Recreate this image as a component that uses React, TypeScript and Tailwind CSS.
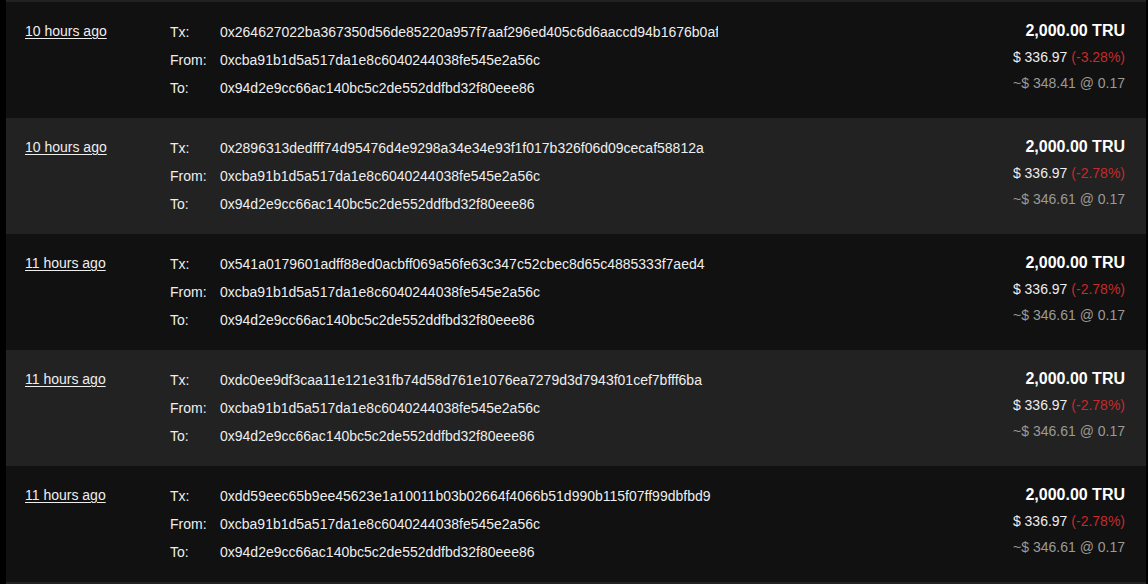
import React from "react";

const rows = [
  { time: "10 hours ago", tx: "0x264627022ba367350d56de85220a957f7aaf296ed405c6d6aaccd94b1676b0af", pct: "-3.28%", est: "~$ 348.41 @ 0.17" },
  { time: "10 hours ago", tx: "0x2896313dedfff74d95476d4e9298a34e34e93f1f017b326f06d09cecaf58812a", pct: "-2.78%", est: "~$ 346.61 @ 0.17" },
  { time: "11 hours ago", tx: "0x541a0179601adff88ed0acbff069a56fe63c347c52cbec8d65c4885333f7aed4", pct: "-2.78%", est: "~$ 346.61 @ 0.17" },
  { time: "11 hours ago", tx: "0xdc0ee9df3caa11e121e31fb74d58d761e1076ea7279d3d7943f01cef7bfff6ba", pct: "-2.78%", est: "~$ 346.61 @ 0.17" },
  { time: "11 hours ago", tx: "0xdd59eec65b9ee45623e1a10011b03b02664f4066b51d990b115f07ff99dbfbd9", pct: "-2.78%", est: "~$ 346.61 @ 0.17" },
];

const FROM = "0xcba91b1d5a517da1e8c6040244038fe545e2a56c";
const TO = "0x94d2e9cc66ac140bc5c2de552ddfbd32f80eee86";

export default function App() {
  return (
    <div
      className="w-[1148px] h-[584px] bg-black flex overflow-hidden"
      style={{ fontFamily: '"Liberation Sans", Arial, sans-serif' }}
    >
      <div className="ml-[6px] w-[1140px] flex flex-col bg-[#222222] pt-[2px]">
        {rows.map((r, i) => (
          <div
            key={i}
            className={`h-[116px] shrink-0 flex pl-[19px] pr-[21px] pt-[20px] ${i % 2 === 0 ? "bg-[#111111]" : "bg-[#222222]"}`}
          >
            <div className="w-[145px] shrink-0 text-[14px] leading-[20px] text-[#eeeeee] underline underline-offset-[2px] -mt-[1px]">
              {r.time}
            </div>
            <div className="flex flex-col text-[14px] leading-[28px] text-[#eeeeee] -mt-[4px]">
              <div className="flex">
                <span className="w-[50px] shrink-0">Tx:</span>
                <span className="w-[498px] overflow-hidden whitespace-nowrap">{r.tx}</span>
              </div>
              <div className="flex">
                <span className="w-[50px] shrink-0">From:</span>
                <span>{FROM}</span>
              </div>
              <div className="flex">
                <span className="w-[50px] shrink-0">To:</span>
                <span>{TO}</span>
              </div>
            </div>
            <div className="ml-auto flex flex-col items-end -mt-[1px]">
              <div className="text-[16px] leading-[20px] font-bold text-white">2,000.00 TRU</div>
              <div className="text-[14px] leading-[16px] mt-[8px] text-[#eeeeee]">
                $ 336.97 <span className="text-[#c62a2a]">({r.pct})</span>
              </div>
              <div className="text-[14px] leading-[16px] mt-[10px] text-[#9a9a9a]">{r.est}</div>
            </div>
          </div>
        ))}
      </div>
    </div>
  );
}
